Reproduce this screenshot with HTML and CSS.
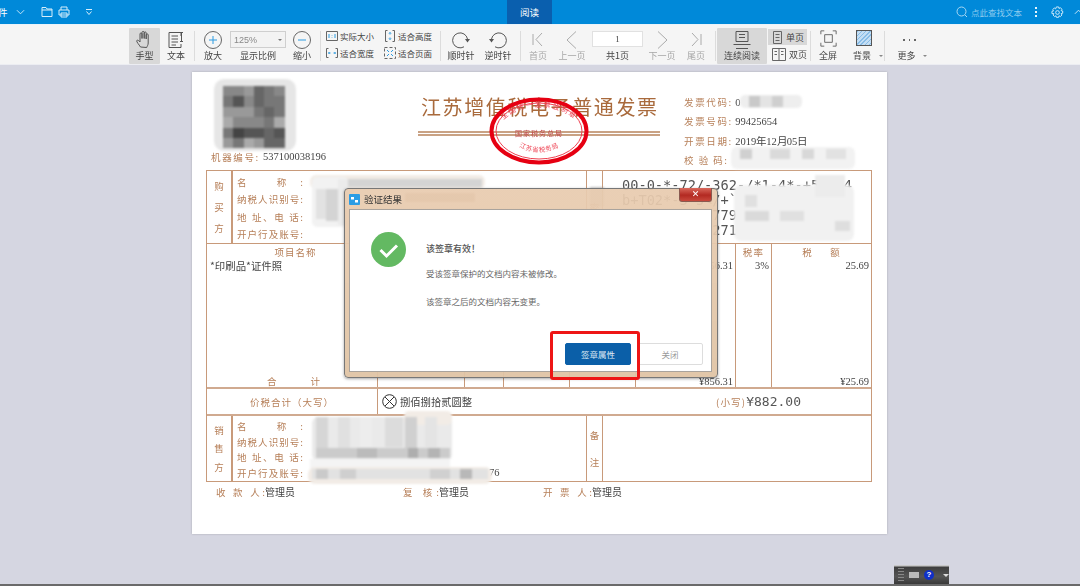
FILE: index.html
```html
<!DOCTYPE html>
<html lang="zh-CN">
<head>
<meta charset="utf-8">
<title>阅读</title>
<link rel="stylesheet" href="styles.css">
</head>
<body>
<div class="app">
  <header class="topbar">
    <div class="top-left">
      <span class="file-label">件</span>
      <svg class="ti chev" viewBox="0 0 10 6"><path d="M1 1l4 4 4-4"/></svg>
      <svg class="ti folder" viewBox="0 0 12 12"><path d="M1 1.500h4l1 1.500h5v7.500H1z"/><path d="M1 4h10"/></svg>
      <svg class="ti print" viewBox="0 0 12 12"><path d="M3 4V1h6v3M1 4h10v5H1zM3 7h6v4H3z"/></svg>
      <svg class="ti drop" viewBox="0 0 8 8"><path d="M1 1.500h6M1.500 3.500L4 6.500l2.500-3"/></svg>
    </div>
    <div class="top-tab">阅读</div>
    <div class="top-right">
      <svg class="ti search" viewBox="0 0 12 12"><circle cx="5.500" cy="5.500" r="4.500"/><path d="M9 9l2 2"/></svg>
      <span class="search-text">点此查找文本</span>
      <span class="dots"><i></i><i></i><i></i></span>
      <svg class="ti gear" viewBox="0 0 14 14"><circle cx="7" cy="7" r="2"/><path d="M5.800 1h2.400l.4 1.700 1.500-.9 1.700 1.700-.9 1.500 1.700.4v2.400l-1.700.4.900 1.500-1.700 1.700-1.500-.9-.4 1.700H5.800l-.4-1.700-1.500.9-1.700-1.700.9-1.500L1 8.200V5.800l1.700-.4-.9-1.500 1.700-1.700 1.500.9z"/></svg>
      <svg class="ti up" viewBox="0 0 10 6"><path d="M1 5l4-4 4 4"/></svg>
    </div>
  </header>

  <nav class="toolbar">
    <div class="tool active">
      <svg class="ic" width="20" height="20" viewBox="0 0 20 20"><path d="M5.500 17c-1.500-2.500-4-5-3.800-6.200.3-1.200 1.800-.7 3.300 1.200V4c0-1.500 2-1.500 2 0v4.500-6c0-1.500 2.200-1.500 2.200 0v6-5.500c0-1.500 2-1.500 2 0v6-4c0-1.500 2-1.500 2 0v8c0 2-1 3-1.500 4.500z"/></svg>
      <span>手型</span>
    </div>
    <div class="tool">
      <svg class="ic" width="20" height="20" viewBox="0 0 20 20"><path d="M15 6V2.500H3v15h12V14M5.500 6H12M5.500 9H12M5.500 12H12M5.500 15H10M14 2.500h3M15.500 2.500v9M14 11.500h3"/></svg>
      <span>文本</span>
    </div>
    <i class="sep"></i>
    <div class="tool">
      <svg class="ic blue" width="20" height="20" viewBox="0 0 20 20"><circle cx="10" cy="10" r="8.500"/><path d="M6 10h8M10 6v8"/></svg>
      <span>放大</span>
    </div>
    <div class="tool">
      <div class="zoom-select"><span>125%</span><b></b></div>
      <span>显示比例</span>
    </div>
    <div class="tool">
      <svg class="ic blue" width="20" height="20" viewBox="0 0 20 20"><circle cx="10" cy="10" r="8.500"/><path d="M6 10h8"/></svg>
      <span>缩小</span>
    </div>
    <i class="sep"></i>
    <div class="fit-col">
      <div class="fit"><svg class="fi" width="12" height="12" viewBox="0 0 12 12"><path d="M.5 1.500h11v9H.5z"/><path class="bl" d="M3 4v4M9 4v4M6 5v.5M6 7v.5"/></svg>实际大小</div>
      <div class="fit"><svg class="fi" width="12" height="12" viewBox="0 0 12 12"><path d="M.5 1.500v9M11.500 1.500v9M.5 1.500h2M.5 10.500h2M11.500 1.500h-2M11.500 10.500h-2"/><path class="bl" d="M2.500 6h2M9.500 6h-2M2.500 6l1-1M2.500 6l1 1M9.500 6l-1-1M9.500 6l-1 1"/></svg>适合宽度</div>
    </div>
    <div class="fit-col">
      <div class="fit"><svg class="fi" width="12" height="12" viewBox="0 0 12 12"><path d="M1.500.5h2M8.500.5h2M1.500 11.500h2M8.500 11.500h2M1.500.5v11M10.500.5v11"/><path class="bl" d="M6 2.500v2M6 9.500v-2M6 2.500l-1 1M6 2.500l1 1M6 9.500l-1-1M6 9.500l1-1"/></svg>适合高度</div>
      <div class="fit"><svg class="fi" width="12" height="12" viewBox="0 0 12 12"><path stroke-dasharray="3 2" d="M.5.5h11v11H.5z"/><path class="bl" d="M3 3l2 2M9 3L7 5M3 9l2-2M9 9L7 7"/></svg>适合页面</div>
    </div>
    <i class="sep"></i>
    <div class="tool">
      <svg class="ic" width="20" height="20" viewBox="0 0 20 20"><path d="M16.500 9A7.500 7.500 0 1 0 13 16.800"/><path class="fill" d="M14 9h5l-2.500 3.500z"/></svg>
      <span>顺时针</span>
    </div>
    <div class="tool">
      <svg class="ic" width="20" height="20" viewBox="0 0 20 20"><path d="M3.500 9A7.500 7.500 0 1 1 7 16.800"/><path class="fill" d="M1 9h5l-2.500 3.500z"/></svg>
      <span>逆时针</span>
    </div>
    <i class="sep"></i>
    <div class="tool off">
      <svg class="ic" width="20" height="20" viewBox="0 0 20 20"><path d="M5 4v11M14 3l-6 6.500 6 6.500"/></svg>
      <span>首页</span>
    </div>
    <div class="tool off">
      <svg class="ic" width="20" height="20" viewBox="0 0 20 20"><path d="M14 1.500L5 10l9 8.500"/></svg>
      <span>上一页</span>
    </div>
    <div class="tool">
      <div class="page-input">1</div>
      <span>共1页</span>
    </div>
    <div class="tool off">
      <svg class="ic" width="20" height="20" viewBox="0 0 20 20"><path d="M6 1.500l9 8.500-9 8.500"/></svg>
      <span>下一页</span>
    </div>
    <div class="tool off">
      <svg class="ic" width="20" height="20" viewBox="0 0 20 20"><path d="M15 4v11M6 3l6 6.500L6 16"/></svg>
      <span>尾页</span>
    </div>
    <i class="sep"></i>
    <div class="tool active">
      <svg class="ic" width="20" height="20" viewBox="0 0 20 20"><path d="M4 1.500h12v10H4zM7 4.500h6M7 7.500h6M1.500 14.500h17M4 18.500h12"/></svg>
      <span>连续阅读</span>
    </div>
    <div class="view-col">
      <div class="view active"><svg class="fi" width="11" height="13" viewBox="0 0 11 13"><path d="M1.500.5h8v12h-8zM3.500 3.500h4M3.500 6.500h4M3.500 9.500h4"/></svg>单页</div>
      <div class="view"><svg class="fi" width="14" height="13" viewBox="0 0 14 13"><path d="M.5.500h13v12H.5zM7 .5v12M2.500 3.500h2.500M2.500 6.500h2.500M9 3.500h2.500M9 6.500h2.500"/></svg>双页</div>
    </div>
    <i class="sep"></i>
    <div class="tool">
      <svg class="ic" width="17" height="17" viewBox="0 0 20 20"><path d="M1 5V1h4M15 1h4v4M19 15v4h-4M5 19H1v-4"/><path d="M5.500 5.500h9v9h-9z"/></svg>
      <span>全屏</span>
    </div>
    <div class="tool">
      <div class="swatch"></div>
      <span>背景</span>
      <b class="mini"></b>
    </div>
    <i class="sep"></i>
    <div class="tool">
      <div class="more-dots"><i></i><i></i><i></i></div>
      <span>更多</span>
      <b class="mini"></b>
    </div>
  </nav>

  <main class="stage">
    <section class="page">
      <div class="inv-head">
        <div class="head-left"><span class="lab-c">机器编号:</span> <span class="num">537100038196</span></div>
        <div class="head-mid">
          <h1 class="inv-title">江苏增值税电子普通发票</h1>
          <div class="title-lines"></div>
        </div>
        <div class="head-right">
          <div><span class="lab-c">发票代码:</span> <span class="num">0</span></div>
          <div><span class="lab-c">发票号码:</span> <span class="num">99425654</span></div>
          <div><span class="lab-c">开票日期:</span> <span class="num">2019年12月05日</span></div>
          <div><span class="lab-c lab-check">校 验 码:</span></div>
        </div>
      </div>

      <div class="inv-table">
        <div class="row row-party row-buyer">
          <div class="side"><span>购</span><span>买</span><span>方</span></div>
          <div class="fields">
            <div class="lab-j">名 称:</div>
            <div class="lab-j">纳税人识别号:</div>
            <div class="lab-j">地 址、电 话:</div>
            <div class="lab-j">开户行及账号:</div>
          </div>
          <div class="side narrow"><span>密</span></div>
          <div class="cipher">00-0-*-72/-362-/*1-4*-+51304
b+T02*-3*5&lt;/+`
           779          *183
           271             .</div>
        </div>

        <div class="row row-items">
          <div class="col col-name"><div class="col-h">项目名称</div><div class="val-l">*印刷品*证件照</div><div class="col-total total-label"><span>合</span><span>计</span></div></div>
          <div class="col"></div>
          <div class="col"></div>
          <div class="col"></div>
          <div class="col"></div>
          <div class="col col-r"><div class="col-h">金额</div><div class="val-r">856.31</div><div class="col-total val-r">¥856.31</div></div>
          <div class="col col-r"><div class="col-h">税率</div><div class="val-r">3%</div><div class="col-total"></div></div>
          <div class="col col-r last"><div class="col-h">税 额</div><div class="val-r">25.69</div><div class="col-total val-r">¥25.69</div></div>
        </div>

        <div class="row row-sum">
          <div class="sum-label">价税合计（大写）</div>
          <div class="sum-value">
            <svg class="cross" width="15" height="15" viewBox="0 0 15 15"><circle cx="7.500" cy="7.500" r="6.800"/><path d="M3 3l9 9M12 3l-9 9"/></svg>
            <span class="sum-cn">捌佰捌拾贰圆整</span>
            <span class="sum-small"><span class="lab-c">(小写)</span><span class="sum-num">¥882.00</span></span>
          </div>
        </div>

        <div class="row row-party row-seller">
          <div class="side"><span>销</span><span>售</span><span>方</span></div>
          <div class="fields">
            <div class="lab-j">名 称:</div>
            <div class="lab-j">纳税人识别号:</div>
            <div class="lab-j">地 址、电 话:</div>
            <div class="lab-j">开户行及账号:<span class="acct">76</span></div>
          </div>
          <div class="side narrow"><span>备</span><span>注</span></div>
          <div class="cipher"></div>
        </div>
      </div>

      <div class="inv-foot">
        <div class="foot-item"><span class="lab-c foot-lab">收 款 人:</span><span class="foot-val">管理员</span></div>
        <div class="foot-item"><span class="lab-c foot-lab short">复 核:</span><span class="foot-val">管理员</span></div>
        <div class="foot-item"><span class="lab-c foot-lab">开 票 人:</span><span class="foot-val">管理员</span></div>
      </div>

      <svg class="overlay" width="695" height="462" viewBox="192 73 695 462">
        <g class="soft">
          <rect x="214" y="80" width="82" height="72" rx="10" fill="#e6e6e6"/>
          <g fill="#888"><rect x="223" y="87" width="11" height="11"/><rect x="233" y="87" width="11" height="11"/></g>
          <rect x="244" y="87" width="10" height="11" fill="#999"/><rect x="254" y="87" width="10" height="11" fill="#666"/><rect x="264" y="87" width="10" height="11" fill="#777"/><rect x="274" y="87" width="11" height="11" fill="#888"/>
          <rect x="223" y="97" width="11" height="11" fill="#777"/><rect x="233" y="97" width="11" height="11" fill="#555"/><rect x="244" y="97" width="10" height="11" fill="#888"/><rect x="254" y="97" width="10" height="11" fill="#666"/><rect x="264" y="97" width="10" height="11" fill="#777"/><rect x="274" y="97" width="11" height="11" fill="#777"/>
          <rect x="223" y="108" width="31" height="10" fill="#999"/><rect x="254" y="108" width="10" height="10" fill="#777"/><rect x="264" y="108" width="10" height="10" fill="#666"/><rect x="274" y="108" width="11" height="10" fill="#777"/>
          <rect x="223" y="118" width="11" height="11" fill="#aaa"/><rect x="233" y="118" width="31" height="11" fill="#888"/><rect x="264" y="118" width="10" height="11" fill="#777"/><rect x="274" y="118" width="11" height="11" fill="#aaa"/>
          <rect x="223" y="129" width="11" height="10" fill="#777"/><rect x="233" y="129" width="11" height="10" fill="#444"/><rect x="244" y="129" width="20" height="10" fill="#555"/><rect x="264" y="129" width="10" height="10" fill="#666"/><rect x="274" y="129" width="11" height="10" fill="#555"/>
          <rect x="223" y="139" width="11" height="10" fill="#999"/><rect x="233" y="139" width="11" height="10" fill="#777"/><rect x="244" y="139" width="10" height="10" fill="#aaa"/><rect x="254" y="139" width="10" height="10" fill="#999"/><rect x="264" y="139" width="21" height="10" fill="#666"/>

          <rect x="310" y="176" width="175" height="14" rx="6" fill="#f2ece6"/>
          <rect x="348" y="180" width="134" height="8" fill="#d4d4d4"/>
          <rect x="312" y="178" width="36" height="50" rx="5" fill="#f2f2f2"/>
          <rect x="316" y="190" width="10" height="30" fill="#e2e2e2"/><rect x="326" y="190" width="12" height="32" fill="#d4d4d4"/><rect x="338" y="180" width="10" height="46" fill="#ebebeb"/>
          <rect x="405" y="194" width="70" height="9" fill="#b8a896"/>
          <rect x="590" y="188" width="14" height="20" fill="#aaa" opacity=".6"/>

          <rect x="740" y="96" width="62" height="13" rx="5" fill="#eee"/>
          <rect x="749" y="97" width="11" height="11" fill="#c9c9c9"/><rect x="772" y="97" width="11" height="11" fill="#cfcfcf"/><rect x="760" y="97" width="12" height="11" fill="#e4e4e4"/>
          <rect x="731" y="148" width="124" height="22" rx="6" fill="#f2f2f2"/>
          <rect x="740" y="150" width="12" height="10" fill="#d0d0d0"/><rect x="770" y="150" width="20" height="10" fill="#dadada"/><rect x="802" y="150" width="12" height="10" fill="#d8d8d8"/><rect x="826" y="150" width="20" height="10" fill="#e2e2e2"/>

          <rect x="734" y="186" width="120" height="56" rx="7" fill="#f1f1f1"/>
          <rect x="745" y="196" width="12" height="12" fill="#e0e0e0"/><rect x="745" y="212" width="24" height="10" fill="#dadada"/><rect x="780" y="212" width="24" height="10" fill="#e0e0e0"/><rect x="815" y="176" width="30" height="22" fill="#ececec"/><rect x="835" y="222" width="15" height="10" fill="#dedede"/>

          <rect x="312" y="418" width="140" height="44" rx="6" fill="#eaeaea"/>
          <rect x="404" y="412" width="48" height="14" rx="5" fill="#f2ece6"/>
          <rect x="316" y="418" width="12" height="41" fill="#d6d6d6"/><rect x="338" y="418" width="12" height="41" fill="#e0e0e0"/><rect x="360" y="418" width="12" height="30" fill="#ededed"/><rect x="385" y="418" width="18" height="30" fill="#dcdcdc"/><rect x="405" y="418" width="12" height="41" fill="#d0d0d0"/><rect x="425" y="418" width="12" height="30" fill="#e4e4e4"/>
          <rect x="316" y="449" width="134" height="10" fill="#cbcbcb"/><rect x="357" y="449" width="20" height="10" fill="#bbb"/><rect x="408" y="449" width="10" height="10" fill="#aeaeae"/><rect x="428" y="449" width="12" height="10" fill="#b4b4b4"/>
          <rect x="310" y="460" width="140" height="10" fill="#f4f4f4"/>
          <rect x="308" y="468" width="184" height="17" rx="7" fill="#f2ece6"/>
          <rect x="312" y="470" width="176" height="10" fill="#e2e2e2"/><rect x="316" y="470" width="12" height="10" fill="#cacaca"/><rect x="340" y="470" width="16" height="10" fill="#cfcfcf"/><rect x="430" y="470" width="20" height="10" fill="#d0d0d0"/><rect x="460" y="470" width="12" height="10" fill="#b8b8b8"/>
        </g>
        <g class="stamp">
          <ellipse cx="539" cy="132" rx="47.500" ry="31.500" class="stamp-thick"/>
          <ellipse cx="539" cy="132" rx="43" ry="28" class="stamp-thin"/>
          <path id="arcTop" d="M498 134A41 26 0 0 1 580 134" fill="none"/>
          <path id="arcBot" d="M510 142Q539 164 568 142" fill="none"/>
          <text class="stamp-t"><textPath href="#arcTop" startOffset="50%" text-anchor="middle">全国统一发票监制章</textPath></text>
          <text class="stamp-m" x="539" y="137" text-anchor="middle">国家税务总局</text>
          <text class="stamp-b"><textPath href="#arcBot" startOffset="50%" text-anchor="middle">江苏省税务局</textPath></text>
        </g>
      </svg>

      <div class="dialog">
        <div class="dlg-title">
          <svg class="dlg-icon" width="11" height="11" viewBox="0 0 11 11"><rect width="11" height="11" rx="1" fill="#2c9de4"/><path d="M2 3h3v2.500H2zM6 6h3v2.500H6z" fill="#fff"/></svg>
          <span>验证结果</span>
          <div class="dlg-close">✕</div>
        </div>
        <div class="dlg-body">
          <div class="dlg-main">
            <svg class="ok" width="35" height="35" viewBox="0 0 35 35"><circle cx="17.500" cy="17.500" r="17.500" fill="#63b962"/><path d="M9.500 18l6 6 10.500-10.500" fill="none" stroke="#fff" stroke-width="3"/></svg>
            <div class="dlg-text">
              <p class="dlg-head">该签章有效！</p>
              <p>受该签章保护的文档内容未被修改。</p>
              <p>该签章之后的文档内容无变更。</p>
            </div>
          </div>
          <div class="dlg-actions">
            <div class="btn btn-primary">签章属性</div>
            <div class="btn">关闭</div>
          </div>
        </div>
        <div class="red-box"></div>
      </div>
    </section>

    <div class="ime">
      <i class="ime-grip"></i>
      <i class="ime-kb"></i>
      <b class="ime-help">?</b>
      <i class="ime-arrow"></i>
    </div>
  </main>
  <div class="statusbar"></div>
</div>
</body>
</html>
```
FILE: styles.css
```css
* { box-sizing: border-box; }
html, body { margin: 0; padding: 0; }
body {
  width: 1080px;
  height: 586px;
  overflow: hidden;
  font-family: "Noto Sans CJK SC", "Liberation Sans", sans-serif;
  color: #444;
}
.app {
  width: 1080px;
  height: 586px;
  display: flex;
  flex-direction: column;
  overflow: hidden;
  filter: blur(0.3px);
}

/* top bar */
.topbar {
  height: 25px;
  flex: none;
  background: #0089d9;
  border-bottom: 1px solid #e9f3fa;
  display: grid;
  grid-template-columns: 507px 45px 1fr;
  color: #fff;
}
.top-left { display: flex; align-items: center; position: relative; }
.file-label { font-size: 9.500px; width: 18px; margin-left: -2px; }
.ti { fill: none; stroke: #d7eefb; stroke-width: 1; display: block; }
.chev { width: 9px; height: 6px; margin-right: 16px; }
.folder { width: 12px; height: 12px; margin-right: 5px; }
.print { width: 12px; height: 12px; margin-right: 15px; }
.drop { width: 8px; height: 8px; }
.top-tab {
  background: #0a5fae;
  font-size: 9.500px;
  display: flex;
  align-items: center;
  justify-content: center;
}
.top-right { display: flex; align-items: center; padding-left: 404px; }
.search { width: 12px; height: 12px; margin-right: 3px; stroke: #a9d8f3; }
.search-text { font-size: 8.500px; color: #8ccaee; width: 60px; }
.dots { display: flex; flex-direction: column; gap: 2px; margin-left: 4px; width: 16px; }
.dots i { width: 2px; height: 2px; background: #e8f5fc; display: block; }
.gear { width: 13px; height: 13px; margin-right: 10px; }
.up { width: 9px; height: 6px; flex: none; }

/* toolbar */
.toolbar {
  height: 40px;
  flex: none;
  background: #f5f5f5;
  border-bottom: 1px solid #ecedf2;
  padding: 3px 0 2px 129px;
  display: grid;
  grid-template-columns: 31px 32px 4px 34px 56px 32px 4px 58px 56px 8px 34px 40px 4px 32px 36px 55px 34px 34px 4px 50px 41px 5px 30px 38px 7px 37px;
  align-items: stretch;
  font-size: 9px;
  color: #444;
}
.tool {
  display: flex;
  flex-direction: column;
  align-items: center;
  justify-content: space-between;
  padding: 2px 0 2px;
  position: relative;
  line-height: 12px;
  white-space: nowrap;
}
.tool.active { background: #d8d8d8; border-radius: 1px; }
.tool.off { color: #a6a6a6; }
.ic { fill: none; stroke: #555; stroke-width: 1; display: block; }
.ic .fill { fill: #555; stroke: none; }
.ic.blue circle { stroke: #666; }
.ic.blue path { stroke: #2d9be0; }
.off .ic { stroke: #aaa; }
.sep { width: 1px; background: #dcdcdc; margin: 3px 0; justify-self: center; }
.zoom-select {
  width: 56px;
  height: 17px;
  margin-top: 1px;
  border: 1px solid #cfcfcf;
  background: #f3f3f3;
  color: #888;
  display: flex;
  align-items: center;
  justify-content: space-between;
  padding: 0 3px;
  font-family: "Liberation Sans", sans-serif;
  font-size: 9px;
}
.zoom-select b { border: 2px solid transparent; border-top-color: #777; margin-top: 2px; }
.fit-col, .view-col { display: flex; flex-direction: column; }
.fit-col { padding: 1px 0 0 4px; gap: 3px; }
.fit { display: flex; align-items: center; gap: 2px; height: 14px; white-space: nowrap; font-size: 8.500px; }
.fi { fill: none; stroke: #666; stroke-width: 1; flex: none; display: block; }
.fi .bl { stroke: #2d9be0; }
.page-input {
  width: 51px;
  height: 16px;
  margin-top: 1px;
  background: #fff;
  border: 1px solid #e1e1e1;
  text-align: center;
  font-family: "Liberation Serif", serif;
  font-size: 9px;
  line-height: 14px;
}
.view-col { padding: 1px 0 0 1px; gap: 1px; }
.view { display: flex; align-items: center; gap: 3px; height: 16px; padding-left: 4px; width: 39px; white-space: nowrap; }
.view.active { background: #d8d8d8; }
.swatch {
  width: 16px;
  height: 16px;
  margin-left: 4px;
  border: 1px solid #555;
  background: repeating-linear-gradient(135deg, #88bde8 0 1px, #c4def4 1px 3px);
}
.more-dots { display: flex; gap: 4px; margin: 9px 0 0 6px; height: 10px; }
.more-dots i { width: 1.500px; height: 1.500px; background: #666; }
.mini {
  position: absolute;
  right: -2px;
  bottom: 5px;
  border: 2px solid transparent;
  border-top-color: #888;
}

/* stage */
.stage {
  flex: 1;
  background: #d5d6e1;
  padding-top: 7px;
  display: flex;
  justify-content: center;
  align-items: flex-start;
  position: relative;
  overflow: hidden;
}
.page {
  width: 695px;
  height: 462px;
  margin-right: 1px;
  background: #fff;
  box-shadow: 0 0 2px #a8a8b0;
  position: relative;
  flex: none;
  font-size: 10px;
}
.lab-c { color: #b67f58; font-size: 9.500px; letter-spacing: 1.650px; }
.num { font-family: "Liberation Serif", serif; font-size: 10.500px; color: #444; }

.inv-head { height: 98px; display: flex; }
.head-left {
  width: 226px;
  padding: 0 0 6px 19px;
  display: flex;
  align-items: flex-end;
  gap: 3px;
  line-height: 14px;
  white-space: nowrap;
}
.head-mid { width: 242px; padding-top: 21px; }
.inv-title {
  margin: 0 0 0 3px;
  font-size: 20px;
  line-height: 28px;
  font-weight: 400;
  letter-spacing: 1.600px;
  color: #a96a3c;
  white-space: nowrap;
}
.title-lines {
  margin-top: 10px;
  height: 5px;
  border-top: 2px solid #c9a284;
  border-bottom: 2px solid #c9a284;
}
.head-right {
  margin-left: 24px;
  padding-top: 21px;
  line-height: 18.300px;
  white-space: nowrap;
}
.lab-check { letter-spacing: 1.500px; }

.inv-table {
  width: 666px;
  margin-left: 14px;
  border: 1px solid #c89a7a;
}
.row { display: grid; }
.row-party { grid-template-columns: 26px 354px 16px 268px; }
.row-buyer { height: 73px; border-bottom: 1px solid #c89a7a; }
.row-seller { height: 65px; }
.side {
  border-right: 1px solid #c89a7a;
  display: flex;
  flex-direction: column;
  align-items: center;
  justify-content: space-around;
  color: #b67f58;
  font-size: 9.500px;
  padding: 5px 0;
}
.row-party .side:first-child { border-right-width: 2px; }
.fields {
  border-right: 1px solid #c89a7a;
  padding: 2px 0 0 4px;
  display: flex;
  flex-direction: column;
  justify-content: space-around;
  position: relative;
}
.lab-j {
  width: 66px;
  color: #b67f58;
  font-size: 9.500px;
  line-height: 14px;
  text-align: justify;
  text-align-last: justify;
  position: relative;
}
.acct {
  position: absolute;
  left: 252px;
  top: 0;
  font-family: "Liberation Serif", serif;
  font-size: 10.500px;
  color: #444;
}
.cipher {
  white-space: pre;
  padding: 7px 0 0 19px;
  font-family: "DejaVu Sans Mono", monospace;
  font-size: 13.650px;
  line-height: 15px;
  color: #555;
  overflow: hidden;
}
.row-items {
  height: 145px;
  grid-template-columns: 171px 87px 39px 66px 66px 100px 36px 99px;
  border-bottom: 2px solid #d0aa90;
}
.col {
  border-right: 1px solid #c89a7a;
  display: flex;
  flex-direction: column;
  padding: 2px 2px 0;
  font-family: "Liberation Serif", serif;
  font-size: 10.500px;
  color: #444;
  line-height: 13px;
  position: relative;
}
.col.last { border-right: 0; }
.col-h {
  font-family: "Noto Sans CJK SC", sans-serif;
  color: #b67f58;
  font-size: 9.500px;
  letter-spacing: 1.200px;
  text-align: center;
}
.col.last .col-h { word-spacing: 14px; }
.col-name .col-h { padding-left: 7px; letter-spacing: 1px; }
.val-l { font-family: "Noto Sans CJK SC", sans-serif; font-size: 10.400px; color: #444; white-space: nowrap; padding-left: 1px; }
.val-r { text-align: right; }
.col-total { margin-top: auto; height: 13px; margin-bottom: -1px; }
.total-label {
  font-family: "Noto Sans CJK SC", sans-serif;
  color: #b67f58;
  font-size: 9.500px;
  display: flex;
  justify-content: center;
  gap: 34px;
  padding-left: 3px;
}
.row-sum {
  height: 27px;
  grid-template-columns: 171px 493px;
  border-bottom: 2px solid #d0aa90;
}
.sum-label {
  border-right: 1px solid #c89a7a;
  color: #b67f58;
  font-size: 9.500px;
  letter-spacing: 1px;
  display: flex;
  align-items: center;
  justify-content: center;
}
.sum-value { display: flex; align-items: center; padding-left: 4px; }
.cross { fill: none; stroke: #333; stroke-width: 1; flex: none; }
.sum-cn { font-size: 10.300px; color: #444; margin-left: 3px; }
.sum-small { margin-left: auto; margin-right: 70px; display: flex; align-items: center; }
.sum-small .lab-c { letter-spacing: 1.200px; }
.sum-num { font-family: "DejaVu Sans Mono", monospace; font-size: 13px; color: #555; }

.inv-foot {
  display: grid;
  grid-template-columns: 187px 140px 1fr;
  padding: 3px 0 0 24px;
  line-height: 14px;
}
.foot-item { display: flex; align-items: center; }
.foot-lab { width: 49px; text-align-last: justify; letter-spacing: 0; }
.foot-lab.short { width: 36px; }
.foot-val { font-size: 10px; color: #444; }

/* overlays */
.overlay { position: absolute; left: 0; top: 0; pointer-events: none; }
.soft { filter: blur(1.200px); }
.stamp-thick { fill: none; stroke: #e60012; stroke-width: 4; }
.stamp-thin { fill: none; stroke: #ee4050; stroke-width: 1; }
.stamp-t { font-size: 7px; letter-spacing: 1.600px; fill: #ee4656; }
.stamp-m { font-size: 7px; letter-spacing: 1px; fill: #c04a4a; }
.stamp-b { font-size: 6.500px; letter-spacing: .5px; fill: #ee4656; }

/* dialog */
.dialog {
  position: absolute;
  left: 152px;
  top: 116px;
  width: 374px;
  height: 190px;
  border: 1px solid #777;
  border-radius: 4px;
  background: linear-gradient(rgba(232, 203, 175, .93), rgba(224, 196, 165, .95));
  box-shadow: 0 1px 3px rgba(0, 0, 0, .35);
  padding: 0 5px 5px 4px;
  display: flex;
  flex-direction: column;
}
.dlg-title {
  height: 20px;
  flex: none;
  display: flex;
  align-items: center;
  gap: 4px;
  font-size: 9.500px;
  color: #333;
  position: relative;
}
.dlg-close {
  position: absolute;
  right: 0;
  top: -1px;
  width: 33px;
  height: 14px;
  background: linear-gradient(#d9685c, #b32a22 55%, #c8483c);
  border: 1px solid #8a5a50;
  border-top: 0;
  border-radius: 0 0 3px 3px;
  color: #fff;
  font-family: "DejaVu Sans", sans-serif;
  font-size: 9px;
  font-weight: 700;
  line-height: 12px;
  text-align: center;
}
.dlg-body {
  flex: 1;
  background: #fff;
  border: 1px solid #a9a39d;
  display: flex;
  flex-direction: column;
  justify-content: space-between;
  padding: 22px 8px 6px 21px;
}
.dlg-main { display: flex; align-items: flex-start; }
.ok { flex: none; }
.dlg-text { margin-left: 20px; padding-top: 11px; font-size: 8.500px; line-height: 12px; color: #666; }
.dlg-text p { margin: 0 0 16px; white-space: nowrap; }
.dlg-text .dlg-head { font-size: 9px; font-weight: 500; color: #555; margin-bottom: 12px; }
.dlg-actions { display: flex; justify-content: flex-end; gap: 6px; }
.btn {
  width: 66px;
  height: 22px;
  border: 1px solid #ddd;
  border-radius: 2px;
  font-size: 8.500px;
  line-height: 20px;
  text-align: center;
  color: #999;
  background: #fff;
}
.btn-primary { background: #0b5fa8; border-color: #0b5fa8; color: #dfeaf5; }
.red-box {
  position: absolute;
  left: 205px;
  top: 142px;
  width: 90px;
  height: 49px;
  border: 3px solid #ee1515;
  border-radius: 3px;
}

/* ime widget */
.ime {
  position: absolute;
  left: 894px;
  bottom: 0;
  width: 55px;
  height: 19px;
  background: linear-gradient(#c8c8c8 0 1px, #3d3d3d 2px, #555 60%, #3a3a3a);
  display: flex;
  align-items: center;
  gap: 5px;
  padding-left: 4px;
}
.ime-grip { width: 6px; height: 14px; background: repeating-linear-gradient(#888 0 1px, transparent 1px 3px); }
.ime-kb { width: 10px; height: 6px; background: #bbb; }
.ime-help {
  width: 10px;
  height: 10px;
  border-radius: 50%;
  background: #1030c8;
  color: #fff;
  font: 700 8px/10px "Liberation Sans", sans-serif;
  text-align: center;
}
.ime-arrow { border: 3px solid transparent; border-top-color: #ddd; margin: 5px 0 0 4px; }
.statusbar { height: 2px; background: #6a6a6a; flex: none; }
```
